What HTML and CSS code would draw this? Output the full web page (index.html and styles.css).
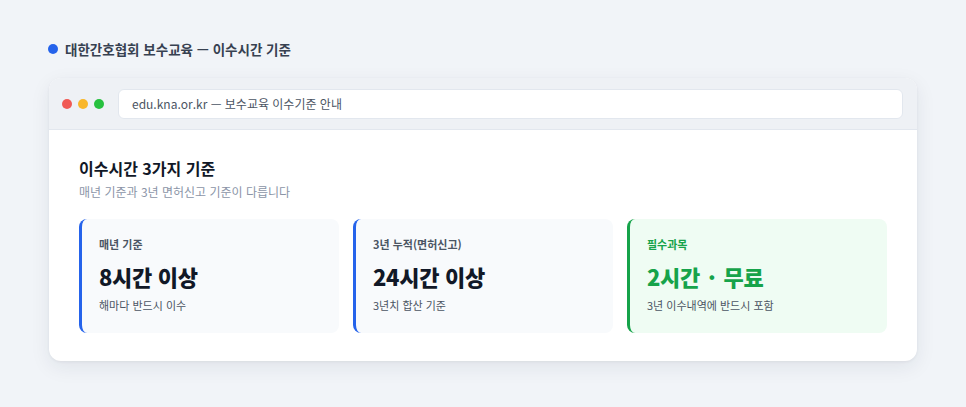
FILE: index.html
```html
<!DOCTYPE html>
<html lang="ko">
<head>
  <meta charset="UTF-8">
  <title>보수교육 이수시간 기준</title>
  <link rel="stylesheet" href="styles.css">
</head>
<body>

  <div class="page">
    <div class="caption">
      <span class="dot"></span>
      <span>대한간호협회 보수교육 — 이수시간 기준</span>
    </div>

    <div class="window">
      <div class="toolbar">
        <div class="lights">
          <span class="light red"></span>
          <span class="light yellow"></span>
          <span class="light green"></span>
        </div>
        <div class="address">edu.kna.or.kr — 보수교육 이수기준 안내</div>
      </div>

      <div class="content">
        <h1>이수시간 3가지 기준</h1>
        <p class="sub">매년 기준과 3년 면허신고 기준이 다릅니다</p>

        <div class="cards">
          <div class="card">
            <div class="card-label">매년 기준</div>
            <div class="card-value">8시간 이상</div>
            <div class="card-note">해마다 반드시 이수</div>
          </div>
          <div class="card">
            <div class="card-label">3년 누적(면허신고)</div>
            <div class="card-value">24시간 이상</div>
            <div class="card-note">3년치 합산 기준</div>
          </div>
          <div class="card card-green">
            <div class="card-label">필수과목</div>
            <div class="card-value">2시간<span class="sep">·</span>무료</div>
            <div class="card-note">3년 이수내역에 반드시 포함</div>
          </div>
        </div>
      </div>
    </div>
  </div>

</body>
</html>
```

FILE: styles.css
```css
body {
  margin: 0;
  font-family: "Noto Sans CJK KR", "Noto Sans", sans-serif;
  background-color: #f1f4f8;
}

.page {
  padding: 40px 49px 45px 49px;
}

/* 상단 제목 */
.caption {
  display: flex;
  align-items: center;
  gap: 7px;
  font-size: 13.5px;
  font-weight: 700;
  color: #374151;
  margin-left: -1px;
  height: 18px;
}

.dot {
  width: 10px;
  height: 10px;
  border-radius: 50%;
  background-color: #2563eb;
}

/* 브라우저 창 */
.window {
  margin-top: 20px;
  width: 868px;
  background-color: #fff;
  border-radius: 12px;
  overflow: hidden;
  box-shadow: 0 6px 20px rgba(30, 41, 59, 0.08), 0 1px 3px rgba(30, 41, 59, 0.06);
}

.toolbar {
  display: flex;
  align-items: center;
  height: 51px;
  padding: 0 14px 0 13px;
  background-color: #eef1f5;
  border-bottom: 1px solid #e2e7ee;
}

.lights {
  display: flex;
  gap: 6px;
  margin-right: 14px;
}

.light {
  width: 10px;
  height: 10px;
  border-radius: 50%;
}

.red { background-color: #f05a55; }
.yellow { background-color: #f9b72a; }
.green { background-color: #27c13f; }

.address {
  flex: 1;
  height: 28px;
  line-height: 28px;
  padding: 0 13px;
  background-color: #fff;
  border: 1px solid #e2e7ee;
  border-radius: 6px;
  font-size: 12px;
  color: #4b5563;
}

.content {
  padding: 27px 30px 28px 30px;
}

h1 {
  margin: 0;
  font-size: 16px;
  font-weight: 700;
  color: #111827;
  line-height: 22px;
}

.sub {
  margin: 4px 0 0 0;
  font-size: 12px;
  color: #8b95a7;
  line-height: 18px;
}

/* 기준 카드 */
.cards {
  display: grid;
  grid-template-columns: repeat(3, 1fr);
  gap: 14px;
  margin-top: 18px;
}

.card {
  height: 114px;
  box-sizing: border-box;
  padding: 17px 16px 0 17px;
  background-color: #f8fafc;
  border-left: 3px solid #2563eb;
  border-radius: 8px;
}

.card-label {
  font-size: 11px;
  font-weight: 700;
  color: #4b5563;
  line-height: 16px;
}

.card-value {
  margin-top: 9px;
  font-size: 22px;
  font-weight: 800;
  color: #111827;
  line-height: 30px;
  letter-spacing: -0.3px;
}

.sep {
  margin: 0 8px;
}

.card-note {
  margin-top: 6px;
  font-size: 11px;
  color: #4b5563;
  line-height: 16px;
}

.card-green {
  background-color: #effcf3;
  border-left-color: #16a34a;
}

.card-green .card-label,
.card-green .card-value {
  color: #16a34a;
}
```
